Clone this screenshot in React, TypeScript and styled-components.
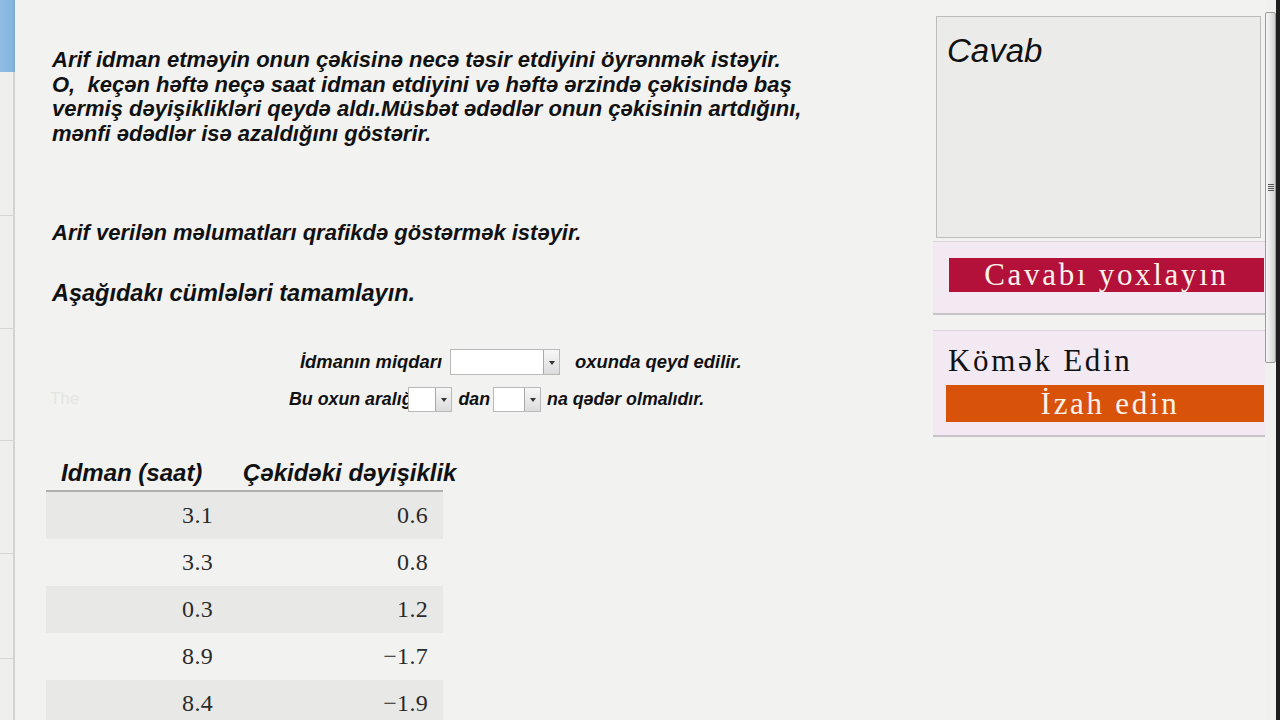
import React from "react";
import styled, { createGlobalStyle } from "styled-components";

const Global = createGlobalStyle`
  html, body { margin: 0; padding: 0; background: #f2f3f1; }
  body { font-family: "Liberation Sans", Arial, sans-serif; }
  #root { width: 1280px; height: 720px; overflow: hidden; }
`;

const Page = styled.div`
  display: grid;
  grid-template-columns: 15px 918px 332px 15px;
  width: 1280px;
  height: 720px;
  overflow: hidden;
  background: #f2f3f1;
`;

const LeftStrip = styled.div`
  display: flex;
  flex-direction: column;
  background: #eff0ee;
  box-shadow: inset -2px 0 0 #d3d4d2;
`;

const LeftTop = styled.div`
  height: 72px;
  background: linear-gradient(90deg, #8fbde6 0%, #86b6e0 80%, #7ea9cf 100%);
`;

const LeftSeg = styled.div<{ $h: number }>`
  height: ${(p) => p.$h}px;
  border-bottom: 1px solid #d6d7d5;
  box-sizing: border-box;
`;

const Main = styled.div`
  padding: 48px 0 0 37px;
  color: #111;
`;

const Para = styled.p`
  margin: 0;
  font-size: 22px;
  line-height: 24.5px;
  font-weight: bold;
  font-style: italic;
  white-space: nowrap;
`;

const Statement = styled.p<{ $top: number; $size: number }>`
  margin: ${(p) => p.$top}px 0 0 0;
  font-size: ${(p) => p.$size}px;
  line-height: 24px;
  font-weight: bold;
  font-style: italic;
  white-space: nowrap;
`;

const Fill = styled.div`
  margin-top: 44px;
  display: flex;
  flex-direction: column;
  gap: 11px;
`;

const FillRow = styled.div<{ $indent: number; $size: number }>`
  display: flex;
  align-items: center;
  height: 26px;
  padding-left: ${(p) => p.$indent}px;
  font-size: ${(p) => p.$size}px;
  font-weight: bold;
  font-style: italic;
  color: #111;
`;

const Word = styled.span<{ $gap?: number; $lead?: number }>`
  margin-left: ${(p) => p.$lead ?? 0}px;
  margin-right: ${(p) => p.$gap ?? 6}px;
  white-space: nowrap;
`;

const Ghost = styled.span`
  display: inline-block;
  width: 239px;
  margin-left: -2px;
  color: #e3e5e3;
  font-weight: normal;
  font-style: normal;
  font-size: 17px;
`;

const Select = styled.div<{ $w: number; $h: number; $shift?: number }>`
  width: ${(p) => p.$w}px;
  height: ${(p) => p.$h}px;
  box-sizing: border-box;
  background: #fff;
  border: 1px solid #b9bab8;
  display: flex;
  justify-content: flex-end;
  margin-left: ${(p) => p.$shift ?? 0}px;
  margin-right: 6px;
`;

const SelectArrow = styled.div`
  width: 16px;
  height: 100%;
  box-sizing: border-box;
  border-left: 1px solid #a8a9a7;
  background: linear-gradient(180deg, #f7f7f7 0%, #dcdcdc 100%);
  display: flex;
  align-items: center;
  justify-content: center;
  &::after {
    content: "";
    border-left: 3px solid transparent;
    border-right: 3px solid transparent;
    border-top: 4px solid #333;
    margin-top: 2px;
  }
`;

const Table = styled.div`
  margin: 43px 0 0 -6px;
  display: grid;
  grid-template-columns: 182px 215px;
  width: 397px;
`;

const HeadCell = styled.div`
  font-size: 24px;
  font-weight: bold;
  font-style: italic;
  white-space: nowrap;
  padding: 4px 0 0 15px;
  height: 37px;
  box-sizing: border-box;
  border-bottom: 2px solid #b0b1af;
  color: #111;
`;

const Cell = styled.div<{ $alt: boolean }>`
  height: 47px;
  box-sizing: border-box;
  background: ${(p) => (p.$alt ? "#e8e9e7" : "transparent")};
  font-family: "Liberation Serif", "Times New Roman", serif;
  font-size: 24px;
  color: #2a2a2a;
  text-align: right;
  padding: 10px 15px 0 0;
  letter-spacing: 0.3px;
`;

const Side = styled.div`
  padding-top: 16px;
  display: flex;
  flex-direction: column;
`;

const AnswerBox = styled.div`
  margin: 0 4px 0 3px;
  height: 222px;
  box-sizing: border-box;
  border: 1px solid #bdbebc;
  background: #ebecea;
  padding: 15px 0 0 10px;
  font-size: 33px;
  font-style: italic;
  color: #111;
`;

const PinkCard = styled.div<{ $top: number; $h: number }>`
  margin-top: ${(p) => p.$top}px;
  height: ${(p) => p.$h}px;
  box-sizing: border-box;
  background: #f3e9f3;
  border-top: 1px solid #dcd3dc;
  border-bottom: 2px solid #c9c3c9;
  display: flex;
  flex-direction: column;
`;

const Btn = styled.div<{ $bg: string; $left: number; $top: number; $h: number; $nudge?: number }>`
  margin: ${(p) => p.$top}px 1px 0 ${(p) => p.$left}px;
  height: ${(p) => p.$h}px;
  background: ${(p) => p.$bg};
  color: #fbf3ea;
  font-family: "Liberation Serif", "Times New Roman", serif;
  font-size: 31px;
  letter-spacing: 2.7px;
  display: flex;
  align-items: center;
  justify-content: center;
  padding-left: ${(p) => p.$nudge ?? 0}px;
`;

const HelpTitle = styled.div`
  margin: 13px 0 0 15px;
  font-family: "Liberation Serif", "Times New Roman", serif;
  font-size: 31px;
  letter-spacing: 2.7px;
  color: #111;
  line-height: 34px;
`;

const ScrollBar = styled.div`
  background: #f0f1ef;
  border-right: 4px solid #1e1e1e;
  box-sizing: border-box;
  display: flex;
  flex-direction: column;
`;

const Thumb = styled.div`
  margin-top: 12px;
  height: 351px;
  box-sizing: border-box;
  border: 1px solid #9a9b99;
  border-radius: 2px;
  background: linear-gradient(90deg, #f5f5f5 0%, #e6e6e6 50%, #cfcfcf 100%);
  display: flex;
  align-items: center;
  justify-content: center;
`;

const Grip = styled.div`
  width: 6px;
  height: 7px;
  background: repeating-linear-gradient(180deg, #555 0 1px, transparent 1px 2px);
`;

const rows: [string, string][] = [
  ["3.1", "0.6"],
  ["3.3", "0.8"],
  ["0.3", "1.2"],
  ["8.9", "\u22121.7"],
  ["8.4", "\u22121.9"],
];

export default function App() {
  return (
    <>
      <Global />
      <Page>
        <LeftStrip>
          <LeftTop />
          <LeftSeg $h={144} />
          <LeftSeg $h={113} />
          <LeftSeg $h={112} />
          <LeftSeg $h={113} />
          <LeftSeg $h={105} />
        </LeftStrip>
        <Main>
          <Para>
            Arif idman etməyin onun çəkisinə necə təsir etdiyini öyrənmək istəyir.
            <br />
            O,&nbsp; keçən həftə neçə saat idman etdiyini və həftə ərzində çəkisində baş
            <br />
            vermiş dəyişiklikləri qeydə aldı.Müsbət ədədlər onun çəkisinin artdığını,
            <br />
            mənfi ədədlər isə azaldığını göstərir.
          </Para>
          <Statement $top={75} $size={22}>
            Arif verilən məlumatları qrafikdə göstərmək istəyir.
          </Statement>
          <Statement $top={36} $size={23.5}>
            Aşağıdakı cümlələri tamamlayın.
          </Statement>
          <Fill>
            <FillRow $indent={248} $size={18.4}>
              <Word $gap={8}>İdmanın miqdarı</Word>
              <Select $w={110} $h={26}>
                <SelectArrow />
              </Select>
              <Word $gap={0} $lead={9}>
                oxunda qeyd edilir.
              </Word>
            </FillRow>
            <FillRow $indent={0} $size={17.8}>
              <Ghost>The</Ghost>
              <Word $gap={0}>Bu oxun aralığı</Word>
              <Select $w={44} $h={25} $shift={-9}>
                <SelectArrow />
              </Select>
              <Word $gap={3}>dan</Word>
              <Select $w={48} $h={25}>
                <SelectArrow />
              </Select>
              <Word $gap={0}>na qədər olmalıdır.</Word>
            </FillRow>
          </Fill>
          <Table>
            <HeadCell>Idman (saat)</HeadCell>
            <HeadCell>Çəkidəki dəyişiklik</HeadCell>
            {rows.map(([a, b], i) => (
              <React.Fragment key={i}>
                <Cell $alt={i % 2 === 0}>{a}</Cell>
                <Cell $alt={i % 2 === 0}>{b}</Cell>
              </React.Fragment>
            ))}
          </Table>
        </Main>
        <Side>
          <AnswerBox>Cavab</AnswerBox>
          <PinkCard $top={3} $h={74}>
            <Btn $bg="#b3103a" $left={16} $top={16} $h={34}>
              Cavabı yoxlayın
            </Btn>
          </PinkCard>
          <PinkCard $top={15} $h={107}>
            <HelpTitle>Kömək Edin</HelpTitle>
            <Btn $bg="#d9520a" $left={13} $top={7} $h={37} $nudge={10}>
              İzah edin
            </Btn>
          </PinkCard>
        </Side>
        <ScrollBar>
          <Thumb>
            <Grip />
          </Thumb>
        </ScrollBar>
      </Page>
    </>
  );
}
